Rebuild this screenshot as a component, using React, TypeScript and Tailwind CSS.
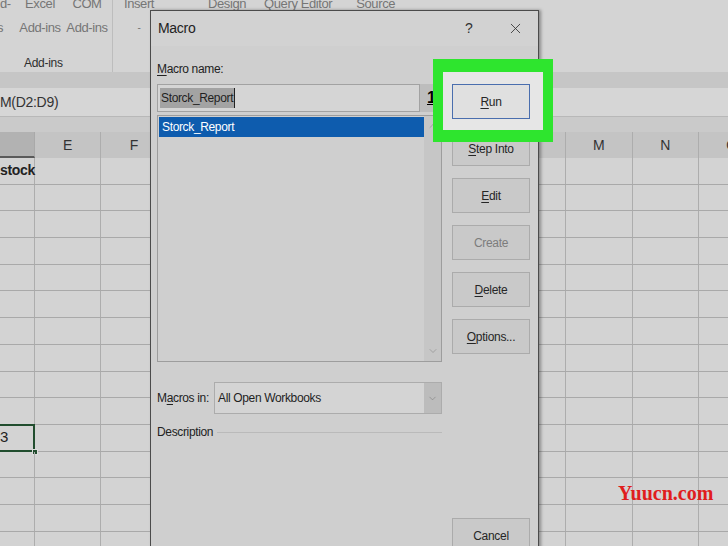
import React from 'react';
import { ChevronDown, ChevronUp, X } from 'lucide-react';

const cols = ['E', 'F', 'G', 'H', 'I', 'J', 'K', 'L', 'M', 'N', 'O'];
const rows = Array.from({ length: 15 }, (_, i) => i + 1);

interface BtnProps {
  children: React.ReactNode;
  disabled?: boolean;
  className?: string;
}

const DlgButton: React.FC<BtnProps> = ({ children, disabled, className = '' }) => (
  <div
    className={`h-[35px] w-[78px] shrink-0 flex items-center justify-center whitespace-nowrap border border-[#ababab] bg-[#c9c9c9] text-[12px] tracking-[-0.3px] ${
      disabled ? 'text-[#7c7c7c]' : 'text-[#262626]'
    } ${className}`}
  >
    {children}
  </div>
);

export default function App() {
  return (
    <div className="relative w-[728px] h-[546px] overflow-hidden bg-[#d3d3d3] text-[#2b2b2b] font-['Liberation_Sans',sans-serif]">
      {/* Ribbon */}
      <div className="h-[72px] bg-[#d4d4d4] flex">
        <div className="w-[113px] shrink-0 border-r border-[#bdbdbd] flex flex-col justify-between">
          <div className="flex -mt-[8px] text-[13px] tracking-[-0.4px] leading-[24px] text-[#767676] whitespace-nowrap">
            <div className="w-[20px] flex flex-col">
              <span>d-</span>
              <span className="-ml-[3px]">s</span>
            </div>
            <div className="w-[40px] flex flex-col items-center">
              <span>Excel</span>
              <span>Add-ins</span>
            </div>
            <div className="ml-[6px] w-[42px] flex flex-col items-center">
              <span>COM</span>
              <span>Add-ins</span>
            </div>
          </div>
          <div className="pl-[24px] pb-[1px] text-[12px] tracking-[-0.3px] leading-[16px] text-[#2e2e2e] whitespace-nowrap">
            Add-ins
          </div>
        </div>
        <div className="flex -mt-[8px] text-[13px] tracking-[-0.4px] leading-[24px] text-[#767676] whitespace-nowrap">
          <div className="ml-[11px] w-[30px] flex flex-col items-center">
            <span>Insert</span>
            <span className="text-[10px]">-</span>
          </div>
          <span className="ml-[54px]">Design</span>
          <span className="ml-[18px]">Query Editor</span>
          <span className="ml-[24px]">Source</span>
        </div>
      </div>

      {/* Formula area */}
      <div className="h-[16px] bg-[#c6c6c6]" />
      <div className="h-[29px] bg-[#d6d6d6] border-b border-[#b8b8b8] flex items-center text-[14px] tracking-[-0.3px] text-[#333]">
        M(D2:D9)
      </div>
      <div className="h-[15px] bg-[#cacaca]" />

      {/* Column header */}
      <div className="h-[26px] flex bg-[#c4c4c4] text-[14px] text-[#333]">
        <div className="w-[35px] shrink-0 bg-[#b2b2b2] border-b-2 border-[#5a5a5a] border-r border-r-[#a9a9a9]" />
        {cols.map((c) => (
          <div key={c} className="w-[66.4px] shrink-0 border-r border-[#adadad] flex items-center justify-center">
            {c}
          </div>
        ))}
      </div>

      {/* Grid */}
      {rows.map((r) => (
        <div key={r} className="h-[26.7px] flex border-b border-[#a9a9a9] bg-[#d3d3d3] text-[14px]">
          <div className="relative w-[35px] shrink-0 border-r border-[#adadad] flex items-center">
            {r === 1 && <span className="font-bold tracking-[-0.3px] text-[#222]">stock</span>}
            {r === 11 && (
              <>
                <span className="text-[15px] text-[#222]">3</span>
                <div className="absolute -left-[2px] -top-[1px] -right-[1px] -bottom-[1px] border-2 border-[#214d2e]" />
                <div className="absolute -right-[4px] -bottom-[4px] w-[6px] h-[6px] bg-[#214d2e] border border-[#dcdcdc]" />
              </>
            )}
          </div>
          {cols.map((c) => (
            <div key={c} className="w-[66.4px] shrink-0 border-r border-[#adadad]" />
          ))}
        </div>
      ))}

      {/* Macro dialog */}
      <div className="absolute left-[150px] top-[10px] w-[389px] h-[560px] bg-[#cfcfcf] border border-[#4b4b4b] shadow-[2px_0_3px_rgba(0,0,0,0.35)] flex flex-col">
        <div className="h-[35px] shrink-0 flex items-center bg-[#d2d2d2]">
          <span className="pl-[7px] text-[14px] tracking-[-0.3px] text-[#222]">Macro</span>
          <div className="ml-auto flex">
            <div className="w-[46px] flex items-center justify-center text-[14px] text-[#333]">?</div>
            <div className="w-[46px] flex items-center justify-center text-[#333]">
              <X size={17} strokeWidth={1.2} />
            </div>
          </div>
        </div>

        <div className="flex px-[6px] pt-[15px]">
          {/* left column */}
          <div className="w-[285px] shrink-0 flex flex-col text-[12px] tracking-[-0.35px] whitespace-nowrap">
            <div className="leading-[16px] text-[#222]">
              <span className="underline underline-offset-2">M</span>acro name:
            </div>
            <div className="mt-[7px] h-[28px] flex">
              <div className="flex-1 border border-[#a2a2a2] bg-[#d5d5d5] flex items-center pl-[2px]">
                <span className="bg-[#a3a3a3] text-[#1f1f1f] px-[1px] leading-[20px] border-r border-[#222]">Storck_Report</span>
              </div>
              <div className="w-[22px] bg-[#bdbdbd] flex items-center pl-[7px] font-bold text-[16px] text-black">
                <span className="underline">1</span>
              </div>
            </div>
            <div className="mt-[3px] h-[247px] border border-[#9d9d9d] bg-[#cfcfcf] flex">
              <div className="flex-1 pt-[1px] pl-[1px]">
                <div className="h-[20px] bg-[#0e5cae] text-white flex items-center pl-[3px]">Storck_Report</div>
              </div>
              <div className="w-[17px] bg-[#c6c6c6] flex flex-col items-center justify-between py-[4px] text-[#8c8c8c]">
                <ChevronUp size={12} strokeWidth={1.3} />
                <ChevronDown size={12} strokeWidth={1.3} />
              </div>
            </div>
            <div className="mt-[20px] h-[32px] flex items-center">
              <div className="w-[57px] shrink-0 text-[#222]">
                M<span className="underline underline-offset-2">a</span>cros in:
              </div>
              <div className="flex-1 h-full flex border border-[#acacac] bg-[#d4d4d4]">
                <div className="flex-1 flex items-center pl-[3px] text-[#1f1f1f]">All Open Workbooks</div>
                <div className="w-[17px] bg-[#bcbcbc] flex items-center justify-center text-[#7d7d7d]">
                  <ChevronDown size={11} strokeWidth={1.3} />
                </div>
              </div>
            </div>
            <div className="mt-[10px] h-[16px] flex items-center">
              <span className="text-[#222]">Description</span>
              <div className="flex-1 ml-[4px] h-px bg-[#bababa]" />
            </div>
          </div>

          {/* right column */}
          <div className="ml-[10px] pt-[23px] flex flex-col gap-[12px]">
            <DlgButton className="relative z-20 !bg-[#e0e0e0] !border-[#4a6eae]">
              <span className="underline underline-offset-2">R</span>un
            </DlgButton>
            <DlgButton>
              <span className="underline underline-offset-2">S</span>tep Into
            </DlgButton>
            <DlgButton>
              <span className="underline underline-offset-2">E</span>dit
            </DlgButton>
            <DlgButton disabled>Create</DlgButton>
            <DlgButton>
              <span className="underline underline-offset-2">D</span>elete
            </DlgButton>
            <DlgButton>
              <span className="underline underline-offset-2">O</span>ptions...
            </DlgButton>
            <DlgButton className="mt-[152px]">Cancel</DlgButton>
          </div>
        </div>
      </div>

      {/* green highlight annotation */}
      <div className="absolute z-10 left-[433px] top-[59px] w-[120px] h-[83px] border-[#2ee52e] border-x-[10px] border-t-[13px] border-b-[12px] bg-[#e6e6e6]" />

      {/* watermark */}
      <div className="absolute left-[618px] top-[481px] text-[20px] leading-[24px] font-bold text-[#e01d1d] font-['Liberation_Serif',serif]">
        Yuucn.com
      </div>
    </div>
  );
}
